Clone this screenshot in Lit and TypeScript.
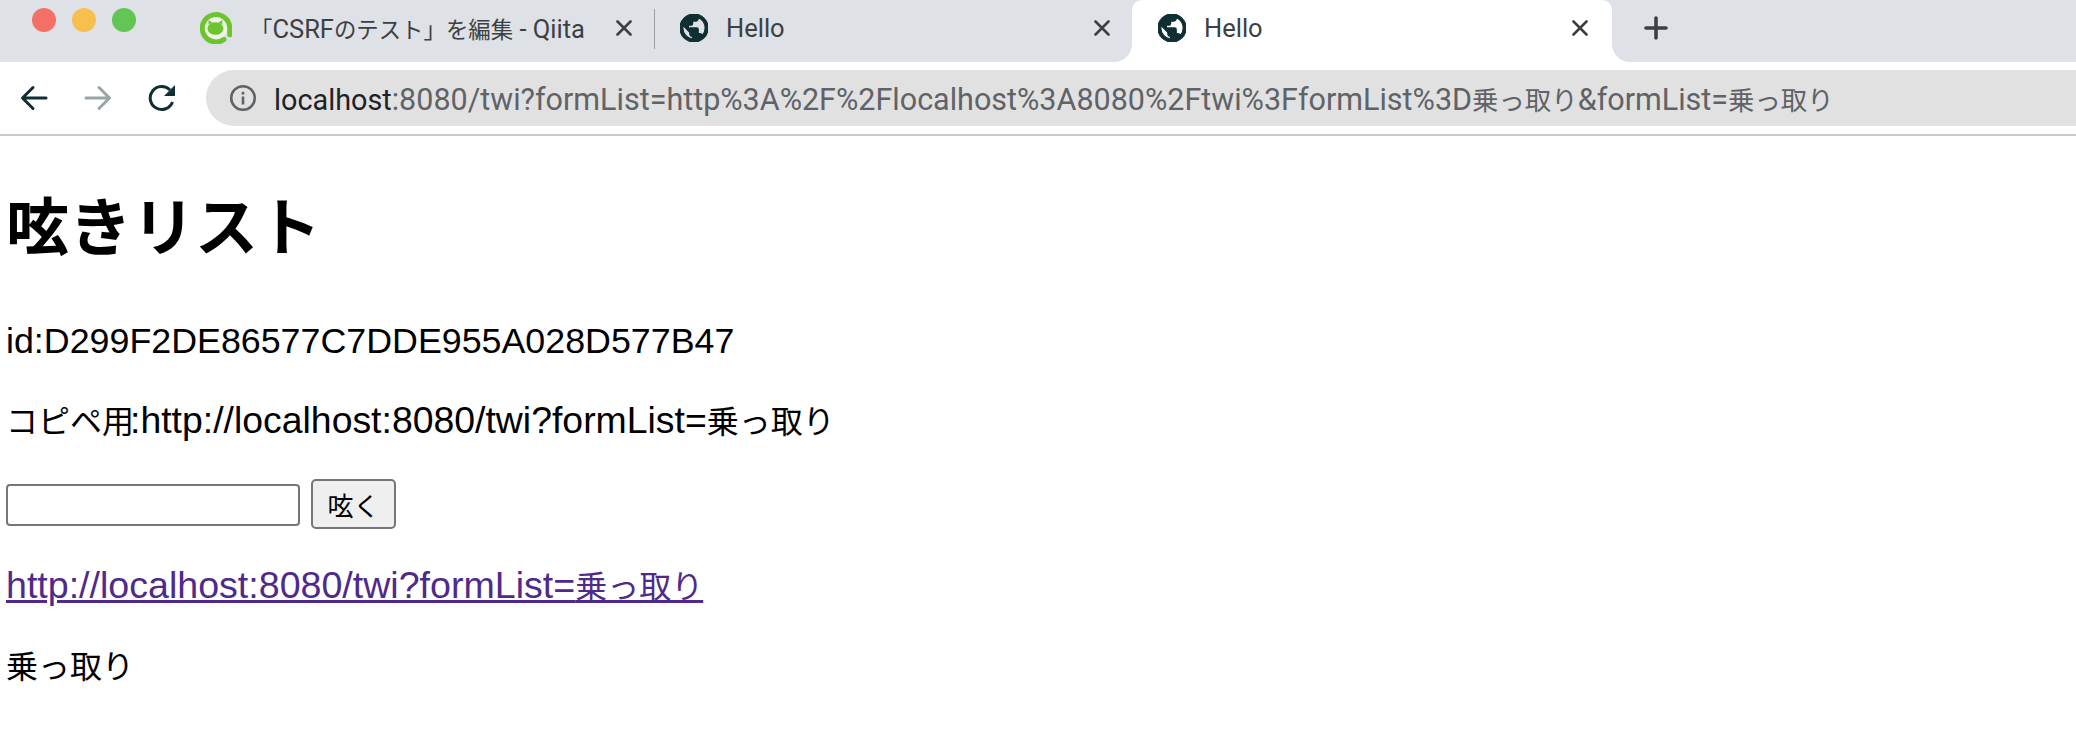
import { LitElement, html, css, svg } from "lit";
import { customElement } from "lit/decorators.js";

const globe = svg`<path fill="#0f2f33" stroke="#0f2f33" stroke-width="0.9" fill-rule="evenodd" d="M12 2C6.48 2 2 6.48 2 12s4.48 10 10 10 10-4.48 10-10S17.52 2 12 2zm-1 17.93c-3.95-.49-7-3.85-7-7.93 0-.62.08-1.21.21-1.79L9 15v1c0 1.1.9 2 2 2v1.93zm6.9-2.54c-.26-.81-1-1.39-1.9-1.39h-1v-3c0-.55-.45-1-1-1H8v-2h2c.55 0 1-.45 1-1V7h2c1.1 0 2-.9 2-2v-.41c2.93 1.19 5 4.06 5 7.41 0 2.08-.8 3.97-2.1 5.39z"/>`;

/* Latin runs are set larger than the CJK runs, as in the reference's font pairing. */
function mix(text: string) {
  return text.split(/([\u3000-\u9fff\uff00-\uffef]+)/).filter(Boolean).map((part) =>
    /[\u3000-\u9fff\uff00-\uffef]/.test(part) ? html`<span class="cjk">${part}</span>` : html`<span class="lat">${part}</span>`
  );
}

@customElement("app-root")
export class AppRoot extends LitElement {
  static styles = css`
    :host { display: block; width: 2076px; height: 740px; overflow: hidden; background: #fff; font-family: "Liberation Sans", "Noto Sans CJK JP", sans-serif; color: #000; }
    .tabs { height: 62px; background: #dee1e6; display: flex; align-items: flex-start; }
    .lights { display: flex; gap: 16px; padding: 8px 0 0 32px; width: 142px; box-sizing: border-box; flex: none; }
    .light { width: 24px; height: 24px; border-radius: 50%; }
    .red { background: #f46f64; }
    .yellow { background: #f8bf4f; }
    .green { background: #62c554; }
    .tab { position: relative; display: flex; align-items: center; height: 56px; box-sizing: border-box; flex: none; font-family: Roboto, "Noto Sans CJK JP", sans-serif; color: #3c4043; }
    .tab .lat { font-size: 25.5px; }
    .tab .cjk { font-size: 22.4px; }
    .tab.one { width: 512px; padding-left: 58px; }
    .tab.two { width: 477px; padding-left: 25px; }
    .tab.active { width: 480px; height: 62px; padding: 0 0 6px 26px; background: #fff; border-radius: 10px 10px 0 0; }
    .tab.active::before, .tab.active::after { content: ""; position: absolute; bottom: 0; width: 18px; height: 18px; }
    .tab.active::before { left: -18px; background: radial-gradient(circle at 0 0, #dee1e6 17.5px, #fff 18.5px); }
    .tab.active::after { right: -18px; background: radial-gradient(circle at 100% 0, #dee1e6 17.5px, #fff 18.5px); }
    .sep { width: 1px; height: 40px; background: #9a9da1; flex: none; margin-top: 9px; }
    .fav { width: 28px; height: 28px; flex: none; }
    .fav.qiita { width: 32px; height: 32px; }
    .title { margin-left: 18px; flex: 1; white-space: nowrap; }
    .x { width: 16px; height: 16px; flex: none; margin-right: 22px; }
    .active .x { margin-right: 24px; }
    .plus { width: 24px; height: 24px; margin: 16px 0 0 32px; flex: none; }
    .toolbar { height: 74px; box-sizing: border-box; border-bottom: 2px solid #c8cccb; display: flex; align-items: flex-start; padding-top: 8px; }
    .nav { width: 28px; height: 28px; flex: none; margin-top: 14px; }
    .nav.back { margin-left: 20px; }
    .nav.fwd, .nav.reload { margin-left: 36px; }
    .omni { margin-left: 30px; flex: 1; height: 56px; background: #e1e1e1; border-radius: 28px 0 0 28px; display: flex; align-items: center; padding-left: 23px; font-family: Roboto, "Noto Sans CJK JP", sans-serif; color: #5f6368; white-space: nowrap; min-width: 0; overflow: hidden; }
    .omni .lat { font-size: 30.5px; }
    .omni .cjk { font-size: 26.4px; }
    .omni svg { width: 28px; height: 28px; flex: none; margin-right: 17px; }
    .host { color: #202124; font-size: 28.8px; }
    main { font-size: 32px; padding-left: 6px; }
    h1 { margin: 55px 0 0; font-size: 63px; line-height: 74px; font-weight: 700; }
    p { margin: 0; line-height: 37px; }
    .id { margin-top: 58px; }
    .id .lat { font-size: 35.8px; }
    .copy { margin-top: 41px; }
    .copy .lat { font-size: 37.4px; margin-left: -4px; }
    .form { display: flex; align-items: center; gap: 12px; margin-top: 38px; }
    input { width: 294px; height: 42px; box-sizing: border-box; border: 2px solid #767676; border-radius: 4px; background: #fff; padding: 0; margin: 2px 0 0; }
    button { width: 85px; height: 50px; box-sizing: border-box; border: 2px solid #767676; border-radius: 5px; background: #efefef; font: 26px "Liberation Sans", "Noto Sans CJK JP", sans-serif; color: #000; padding: 0; margin-left: -1px; }
    .link { margin-top: 38px; }
    .link .lat { font-size: 37.6px; }
    a { color: #4f2a8c; text-decoration: underline; }
    .last { margin-top: 43px; }
  `;

  private x() {
    return html`<svg class="x" viewBox="0 0 16 16"><path d="M1.5 1.5 L14.5 14.5 M14.5 1.5 L1.5 14.5" stroke="#3c4043" stroke-width="2.6" stroke-linecap="round" fill="none"/></svg>`;
  }

  render() {
    return html`
      <div class="tabs">
        <div class="lights">
          <span class="light red"></span>
          <span class="light yellow"></span>
          <span class="light green"></span>
        </div>
        <div class="tab one">
          <svg class="fav qiita" viewBox="0 0 28 28">
            <circle cx="14" cy="14" r="10" fill="#eef3e6"/>
            <path d="M21 24 A12 12 0 1 1 26 14 L26 20" fill="none" stroke="#6cc52f" stroke-width="4.4" stroke-linecap="round"/>
            <ellipse cx="13.5" cy="14.5" rx="7" ry="5.5" fill="#6cc52f"/>
            <path d="M7.5 11 L7.5 7 L11 9.5 Z M19.5 11 L19.5 7 L16 9.5Z" fill="#6cc52f"/>
          </svg>
          <span class="title">${mix("「CSRFのテスト」を編集 - Qiita")}</span>${this.x()}
        </div>
        <div class="sep"></div>
        <div class="tab two">
          <svg class="fav" viewBox="2 2 20 20">${globe}</svg><span class="title">${mix("Hello")}</span>${this.x()}
        </div>
        <div class="tab active">
          <svg class="fav" viewBox="2 2 20 20">${globe}</svg><span class="title">${mix("Hello")}</span>${this.x()}
        </div>
        <svg class="plus" viewBox="0 0 24 24"><path d="M12 2 V22 M2 12 H22" stroke="#3c4043" stroke-width="3.6" stroke-linecap="round" fill="none"/></svg>
      </div>
      <div class="toolbar">
        <svg class="nav back" viewBox="0 0 28 28"><path d="M26 14 H3 M13 3.5 L2.5 14 L13 24.5" fill="none" stroke="#0f2f33" stroke-width="3" stroke-linecap="round" stroke-linejoin="round"/></svg>
        <svg class="nav fwd" viewBox="0 0 28 28"><path d="M2 14 H25 M15 3.5 L25.5 14 L15 24.5" fill="none" stroke="#9aa5a5" stroke-width="3" stroke-linecap="round" stroke-linejoin="round"/></svg>
        <svg class="nav reload" viewBox="0 0 28 28"><path d="M24.5 18 A11.5 11.5 0 1 1 22 6" fill="none" stroke="#0f2f33" stroke-width="3"/><path d="M27 1 V12 H16 Z" fill="#0f2f33"/></svg>
        <div class="omni">
          <svg viewBox="0 0 28 28"><circle cx="14" cy="14" r="11.8" fill="none" stroke="#5f6368" stroke-width="2.6"/><rect x="12.7" y="12.5" width="2.6" height="8" fill="#5f6368"/><rect x="12.7" y="7.8" width="2.6" height="2.8" fill="#5f6368"/></svg>
          <span><span class="host">localhost</span>${mix(":8080/twi?formList=http%3A%2F%2Flocalhost%3A8080%2Ftwi%3FformList%3D乗っ取り&formList=乗っ取り")}</span>
        </div>
      </div>
      <main>
        <h1>呟きリスト</h1>
        <p class="id">${mix("id:D299F2DE86577C7DDE955A028D577B47")}</p>
        <p class="copy">${mix("コピペ用:http://localhost:8080/twi?formList=乗っ取り")}</p>
        <div class="form"><input type="text" /><button>呟く</button></div>
        <p class="link"><a href="#">${mix("http://localhost:8080/twi?formList=乗っ取り")}</a></p>
        <p class="last">乗っ取り</p>
      </main>
    `;
  }
}
